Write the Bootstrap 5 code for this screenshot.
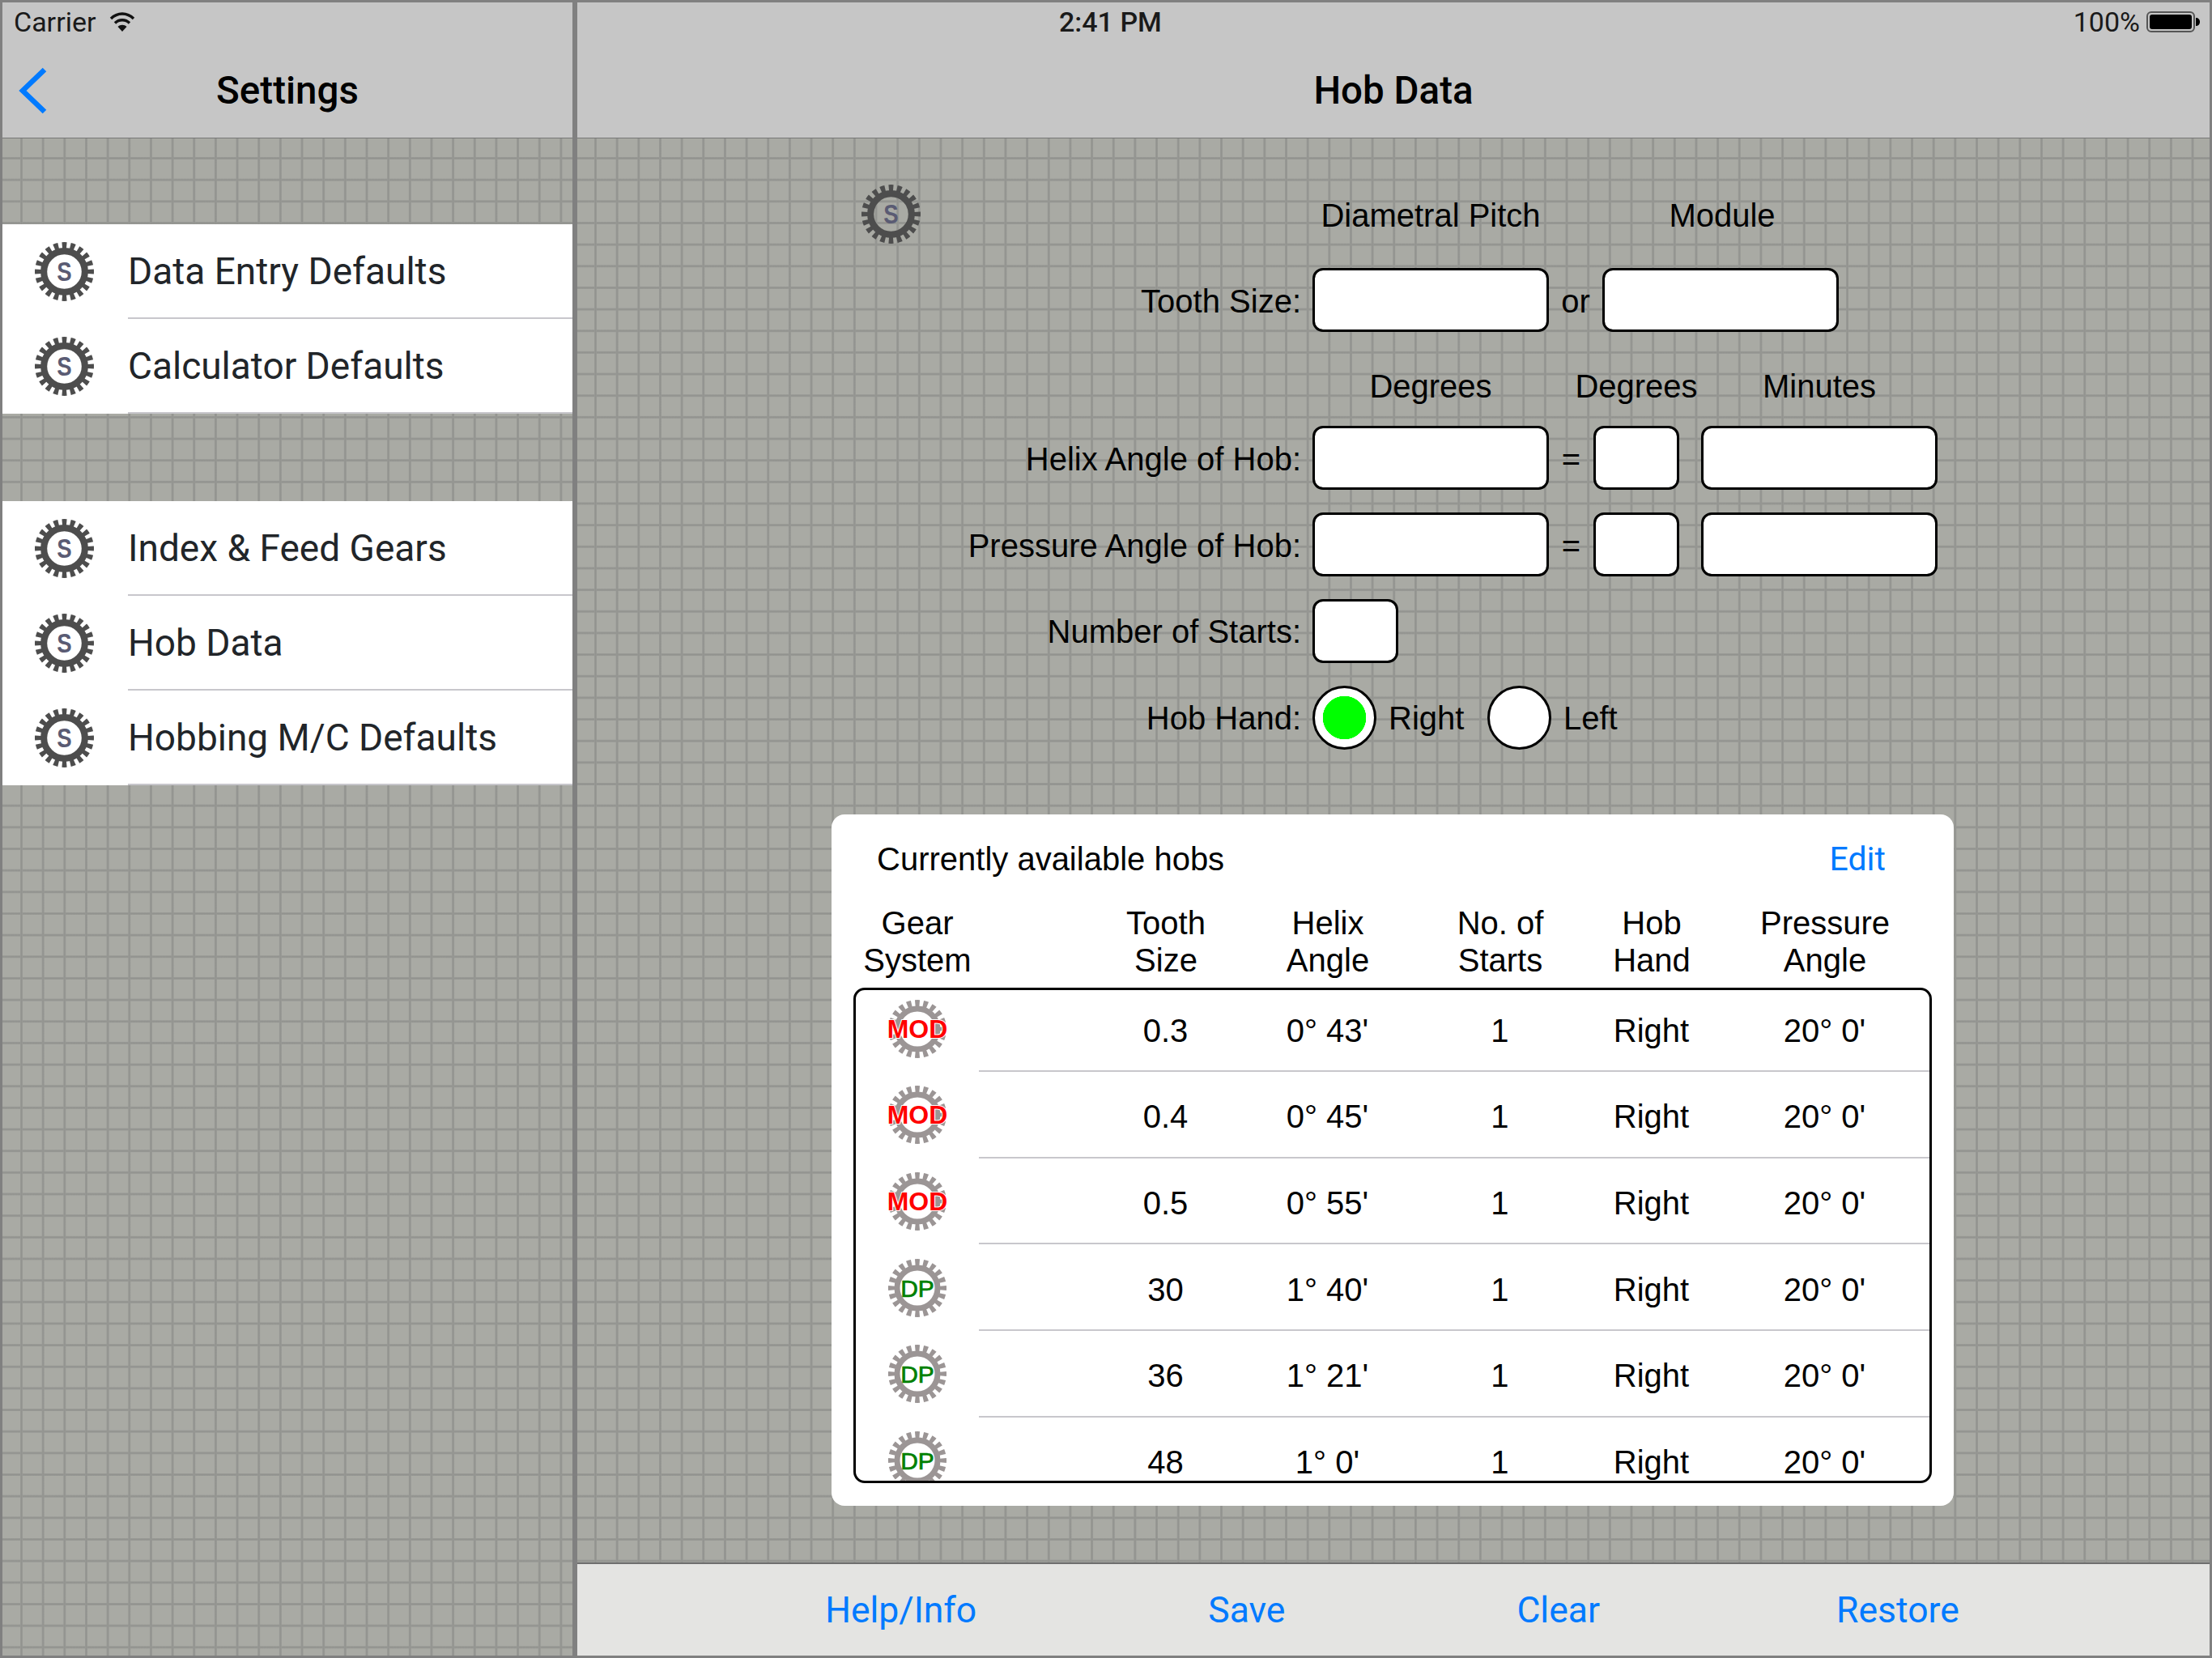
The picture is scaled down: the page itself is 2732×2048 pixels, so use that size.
<!DOCTYPE html>
<html lang="en">
<head>
  <meta charset="UTF-8">
  <title>Hob Data</title>
  <meta name="viewport" content="width=device-width, initial-scale=1">
  <link href="https://cdn.jsdelivr.net/npm/bootstrap@5.3.0/dist/css/bootstrap.min.css" rel="stylesheet" />
  <style>
    body {
      height: 2048px;
      padding: 3px;
      background-color: #808080;
      font-family: "Liberation Sans", Arial, sans-serif;
      font-size: 40px;
      line-height: 46px;
      color: #000;
      overflow: hidden;
    }
    .ios { font-family: Roboto, "Liberation Sans", sans-serif; }
    .pane-side { width: 704px; }
    .pane-main { margin-left: 6px; width: 2016px; }
    .bar {
      height: 168px;
      background-color: #c6c6c6;
      border-bottom: 1px solid #777;
    }
    .status { height: 48px; padding: 0 12px 0 14px; font-size: 34px; color: #1a1a1a; }
    .status .time { margin-left: 581px; font-weight: 500; }
    .title { height: 119px; padding-top: 3px; font-size: 47.500px; font-weight: 500; }
    .back { width: 80px; padding-left: 19px; }
    .grid-area {
      background-color: #a9aaa4;
      background-image:
        linear-gradient(to right, #9c9d99 0, #92938f 1px, #92938f 2px, #9c9d99 3px, transparent 3px),
        linear-gradient(to bottom, #9c9d99 0, #92938f 1px, #92938f 2px, #9c9d99 3px, transparent 3px);
      background-size: 26.67px 26.67px;
    }
    .pane-side .grid-area { background-position: 22px 23px; }
    .pane-main .grid-area { background-position: 21px 23px; }

    /* sidebar lists */
    .side-list { border-radius: 0; margin-top: 106px; }
    .side-list + .side-list { margin-top: 108px; }
    .side-list .list-group-item { display: flex; height: 117px; padding: 0; border: 0; font-size: 46px; }
    .side-ico { width: 155px; padding-left: 40px; }
    .side-text { border-bottom: 2px solid #c8c7cc; }

    /* form */
    .form-area { padding-top: 60px; }
    .row-head { height: 70px; }
    .row-head2 { height: 50px; margin-top: 42px; margin-bottom: 24px; }
    .row-field { height: 79px; margin-bottom: 28px; }
    .row-first { margin-top: 30px; margin-bottom: 41px; }
    .row-nudge .lbl, .row-nudge .sep-or, .row-nudge .sep-eq { padding-top: 3px; }
    .lbl { width: 908px; padding-right: 14px; text-align: right; }
    .gear-top { margin-right: 470px; margin-top: -3px; }
    .w-lg { width: 292px; }
    .w-sm { width: 106px; }
    .sep-or { width: 66px; text-align: center; }
    .sep-eq { width: 55px; text-align: center; }
    .gap-min { margin-left: 27px; }
    .form-control.field {
      height: 79px;
      padding: 0;
      border: 3px solid #000;
      border-radius: 13px;
    }
    .form-check-input.hand, .form-check-input.hand:checked {
      width: 79px;
      height: 79px;
      margin: 0;
      border: 3px solid #000;
      background-color: #fff;
      background-image: none;
    }
    .form-check-input.hand:checked { background-image: radial-gradient(circle, #0f0 26.5px, #fff 27px); }
    .hand-lbl { padding-left: 15px; }
    .hand-right { width: 137px; }

    /* hobs card */
    .hob-card {
      margin: 79.500px 0 0 314px;
      width: 1386px;
      height: 854px;
      border: 0;
      border-radius: 16px;
    }
    .hob-top { height: 111px; padding: 0 84px 0 56px; }
    .hob-edit { color: #007aff; font-size: 41px; text-decoration: none; }
    .hob-head { margin-left: 30px; text-align: center; }
    .c-gear { flex: none; width: 283px; padding-right: 131px; }
    .c-size, .c-helix { flex: none; width: 200px; }
    .c-starts { flex: none; width: 226px; }
    .c-hand { flex: none; width: 148px; }
    .c-press { flex: none; width: 280px; }
    .hob-box {
      margin: 11px 0 0 27px;
      width: 1332px;
      height: 612px;
      border: 3px solid #000;
      border-radius: 14px;
      overflow: hidden;
    }
    .hob-list { margin-top: -5px; }
    .hob-row { height: 106.670px; text-align: center; }
    .hob-ico { width: 154px; }
    .hob-cells { border-bottom: 2px solid #c8c7cc; padding: 6px 0 0 130px; min-width: 0; overflow: hidden; }

    /* toolbar */
    .tools {
      height: 115px;
      padding-right: 3px;
      background-color: #e4e4e2;
      border-top: 2px solid #6f6f6f;
      gap: 286px;
      font-size: 44.500px;
    }
    .tools a { color: #007aff; text-decoration: none; }
    .tools a:last-child { margin-left: 6px; }

    .gear-text { font-family: "Liberation Sans", Arial, sans-serif; text-anchor: middle; }
    .gear-mod { font-size: 32px; font-weight: 700; fill: #f00; stroke: #fff; stroke-width: 2px; paint-order: stroke; }
    .gear-dp { font-size: 30px; fill: #008000; stroke: #008000; stroke-width: 0.700px; }
    .gear-s { font-size: 32px; font-weight: 700; fill: #5a5b73; }
  </style>
</head>
<body class="d-flex">

<svg width="0" height="0" class="position-absolute">
  <symbol id="gearDark" viewBox="0 0 72 72">
    <circle cx="36" cy="36" r="32" fill="none" stroke="#4d4d4d" stroke-width="8" pathLength="40" stroke-dasharray="1.100 0.900" stroke-dashoffset="0.550"/>
    <circle cx="36" cy="36" r="25" fill="none" stroke="#4d4d4d" stroke-width="8"/>
  </symbol>
  <symbol id="gearGrey" viewBox="0 0 72 72">
    <circle cx="36" cy="36" r="32" fill="none" stroke="#9b9595" stroke-width="8" pathLength="40" stroke-dasharray="1.100 0.900" stroke-dashoffset="0.550"/>
    <circle cx="36" cy="36" r="25" fill="none" stroke="#9b9595" stroke-width="7"/>
  </symbol>
</svg>

<!-- Settings column -->
<aside class="pane-side d-flex flex-column">
  <header class="bar ios d-flex flex-column">
    <div class="status d-flex align-items-center gap-3">
      <span>Carrier</span>
      <svg width="32" height="26" viewBox="0 0 32 26" fill="none" stroke="#111" stroke-width="3.400">
        <path d="M2 9C10 1 22 1 30 9"/><path d="M7 14.500C12 9.500 20 9.500 25 14.500"/>
        <path d="M16 25L10.500 19C13.500 16 18.500 16 21.500 19Z" fill="#111" stroke="none"/>
      </svg>
    </div>
    <div class="title d-flex align-items-center">
      <a href="#" class="back"><svg width="38" height="58" viewBox="0 0 38 58" fill="none" stroke="#007aff" stroke-width="6.500"><path d="M33 3L6 29L33 55"/></svg></a>
      <div class="flex-fill text-center">Settings</div>
      <div class="back"></div>
    </div>
  </header>
  <div class="grid-area flex-fill ios">
    <ul class="list-group list-group-flush side-list">
      <li class="list-group-item"><div class="side-ico d-flex align-items-center"><svg width="73" height="73" viewBox="0 0 72 72"><use href="#gearDark"/><text transform="translate(36 47.500) scale(.85 1)" class="gear-text gear-s">S</text></svg></div><div class="side-text flex-fill d-flex align-items-center">Data Entry Defaults</div></li>
      <li class="list-group-item"><div class="side-ico d-flex align-items-center"><svg width="73" height="73" viewBox="0 0 72 72"><use href="#gearDark"/><text transform="translate(36 47.500) scale(.85 1)" class="gear-text gear-s">S</text></svg></div><div class="side-text flex-fill d-flex align-items-center">Calculator Defaults</div></li>
    </ul>
    <ul class="list-group list-group-flush side-list">
      <li class="list-group-item"><div class="side-ico d-flex align-items-center"><svg width="73" height="73" viewBox="0 0 72 72"><use href="#gearDark"/><text transform="translate(36 47.500) scale(.85 1)" class="gear-text gear-s">S</text></svg></div><div class="side-text flex-fill d-flex align-items-center">Index &amp; Feed Gears</div></li>
      <li class="list-group-item"><div class="side-ico d-flex align-items-center"><svg width="73" height="73" viewBox="0 0 72 72"><use href="#gearDark"/><text transform="translate(36 47.500) scale(.85 1)" class="gear-text gear-s">S</text></svg></div><div class="side-text flex-fill d-flex align-items-center">Hob Data</div></li>
      <li class="list-group-item"><div class="side-ico d-flex align-items-center"><svg width="73" height="73" viewBox="0 0 72 72"><use href="#gearDark"/><text transform="translate(36 47.500) scale(.85 1)" class="gear-text gear-s">S</text></svg></div><div class="side-text flex-fill d-flex align-items-center">Hobbing M/C Defaults</div></li>
    </ul>
  </div>
</aside>

<!-- Hob data -->
<main class="pane-main d-flex flex-column">
  <header class="bar ios d-flex flex-column">
    <div class="status d-flex align-items-center">
      <span class="time">2:41 PM</span>
      <span class="ms-auto me-2">100%</span>
      <svg width="66" height="26" viewBox="0 0 66 26">
        <rect x="1" y="1" width="58" height="24" rx="5" fill="none" stroke="#555" stroke-width="2"/>
        <rect x="4" y="4" width="52" height="18" rx="3" fill="#000"/>
        <path d="M61 8C64 8 66 10 66 13C66 16 64 18 61 18Z" fill="#000"/>
      </svg>
    </div>
    <div class="title d-flex align-items-center justify-content-center">Hob Data</div>
  </header>

  <div class="grid-area flex-fill overflow-hidden form-area">
    <div class="d-flex align-items-center row-head">
      <div class="lbl"><svg class="gear-top" width="73" height="73" viewBox="0 0 72 72"><use href="#gearDark"/><text transform="translate(36 47.500) scale(.85 1)" class="gear-text gear-s">S</text></svg></div>
      <div class="w-lg text-center">Diametral Pitch</div>
      <div class="sep-or"></div>
      <div class="w-lg text-center ps-1">Module</div>
    </div>
    <div class="d-flex align-items-center row-field row-first row-nudge">
      <div class="lbl">Tooth Size:</div>
      <input class="form-control field w-lg" type="text">
      <div class="sep-or">or</div>
      <input class="form-control field w-lg" type="text">
    </div>
    <div class="d-flex align-items-center row-head2">
      <div class="lbl"></div>
      <div class="w-lg text-center">Degrees</div>
      <div class="sep-eq"></div>
      <div class="w-sm d-flex justify-content-center">Degrees</div>
      <div class="w-lg text-center gap-min">Minutes</div>
    </div>
    <div class="d-flex align-items-center row-field row-nudge">
      <div class="lbl">Helix Angle of Hob:</div>
      <input class="form-control field w-lg" type="text">
      <div class="sep-eq">=</div>
      <input class="form-control field w-sm" type="text">
      <input class="form-control field w-lg gap-min" type="text">
    </div>
    <div class="d-flex align-items-center row-field row-nudge">
      <div class="lbl">Pressure Angle of Hob:</div>
      <input class="form-control field w-lg" type="text">
      <div class="sep-eq">=</div>
      <input class="form-control field w-sm" type="text">
      <input class="form-control field w-lg gap-min" type="text">
    </div>
    <div class="d-flex align-items-center row-field">
      <div class="lbl">Number of Starts:</div>
      <input class="form-control field w-sm" type="text">
    </div>
    <div class="d-flex align-items-center row-field mb-0">
      <div class="lbl">Hob Hand:</div>
      <input class="form-check-input hand" type="radio" name="hand" checked>
      <div class="hand-lbl hand-right">Right</div>
      <input class="form-check-input hand" type="radio" name="hand">
      <div class="hand-lbl">Left</div>
    </div>

    <div class="card hob-card">
      <div class="hob-top d-flex align-items-center justify-content-between">
        <span>Currently available hobs</span>
        <a href="#" class="hob-edit ios">Edit</a>
      </div>
      <div class="hob-head d-flex">
        <div class="c-gear">Gear<br>System</div>
        <div class="c-size">Tooth<br>Size</div>
        <div class="c-helix">Helix<br>Angle</div>
        <div class="c-starts">No. of<br>Starts</div>
        <div class="c-hand">Hob<br>Hand</div>
        <div class="c-press">Pressure<br>Angle</div>
      </div>
      <div class="hob-box">
        <div class="hob-list" id="hobRows"></div>
      </div>
    </div>
  </div>

  <nav class="tools ios d-flex align-items-center justify-content-center">
    <a href="#">Help/Info</a>
    <a href="#">Save</a>
    <a href="#">Clear</a>
    <a href="#">Restore</a>
  </nav>
</main>

<script>
  const hobs = [
    ["MOD", "0.3", "0° 43'"],
    ["MOD", "0.4", "0° 45'"],
    ["MOD", "0.5", "0° 55'"],
    ["DP", "30", "1° 40'"],
    ["DP", "36", "1° 21'"],
    ["DP", "48", "1° 0'"]
  ];
  const box = document.getElementById("hobRows");
  hobs.forEach(h => {
    const cls = h[0] === "MOD" ? "gear-mod" : "gear-dp";
    const row = document.createElement("div");
    row.className = "hob-row d-flex";
    row.innerHTML = `
      <div class="hob-ico d-flex align-items-center justify-content-center">
        <svg width="72" height="72" viewBox="0 0 72 72"><use href="#gearGrey"/><text x="36" y="47" class="gear-text ${cls}">${h[0]}</text></svg>
      </div>
      <div class="hob-cells flex-fill d-flex align-items-center">
        <div class="c-size">${h[1]}</div>
        <div class="c-helix">${h[2]}</div>
        <div class="c-starts">1</div>
        <div class="c-hand">Right</div>
        <div class="c-press">20° 0'</div>
      </div>`;
    box.appendChild(row);
  });
</script>

<script src="https://cdn.jsdelivr.net/npm/bootstrap@5.3.0/dist/js/bootstrap.bundle.min.js"></script>
</body>
</html>
